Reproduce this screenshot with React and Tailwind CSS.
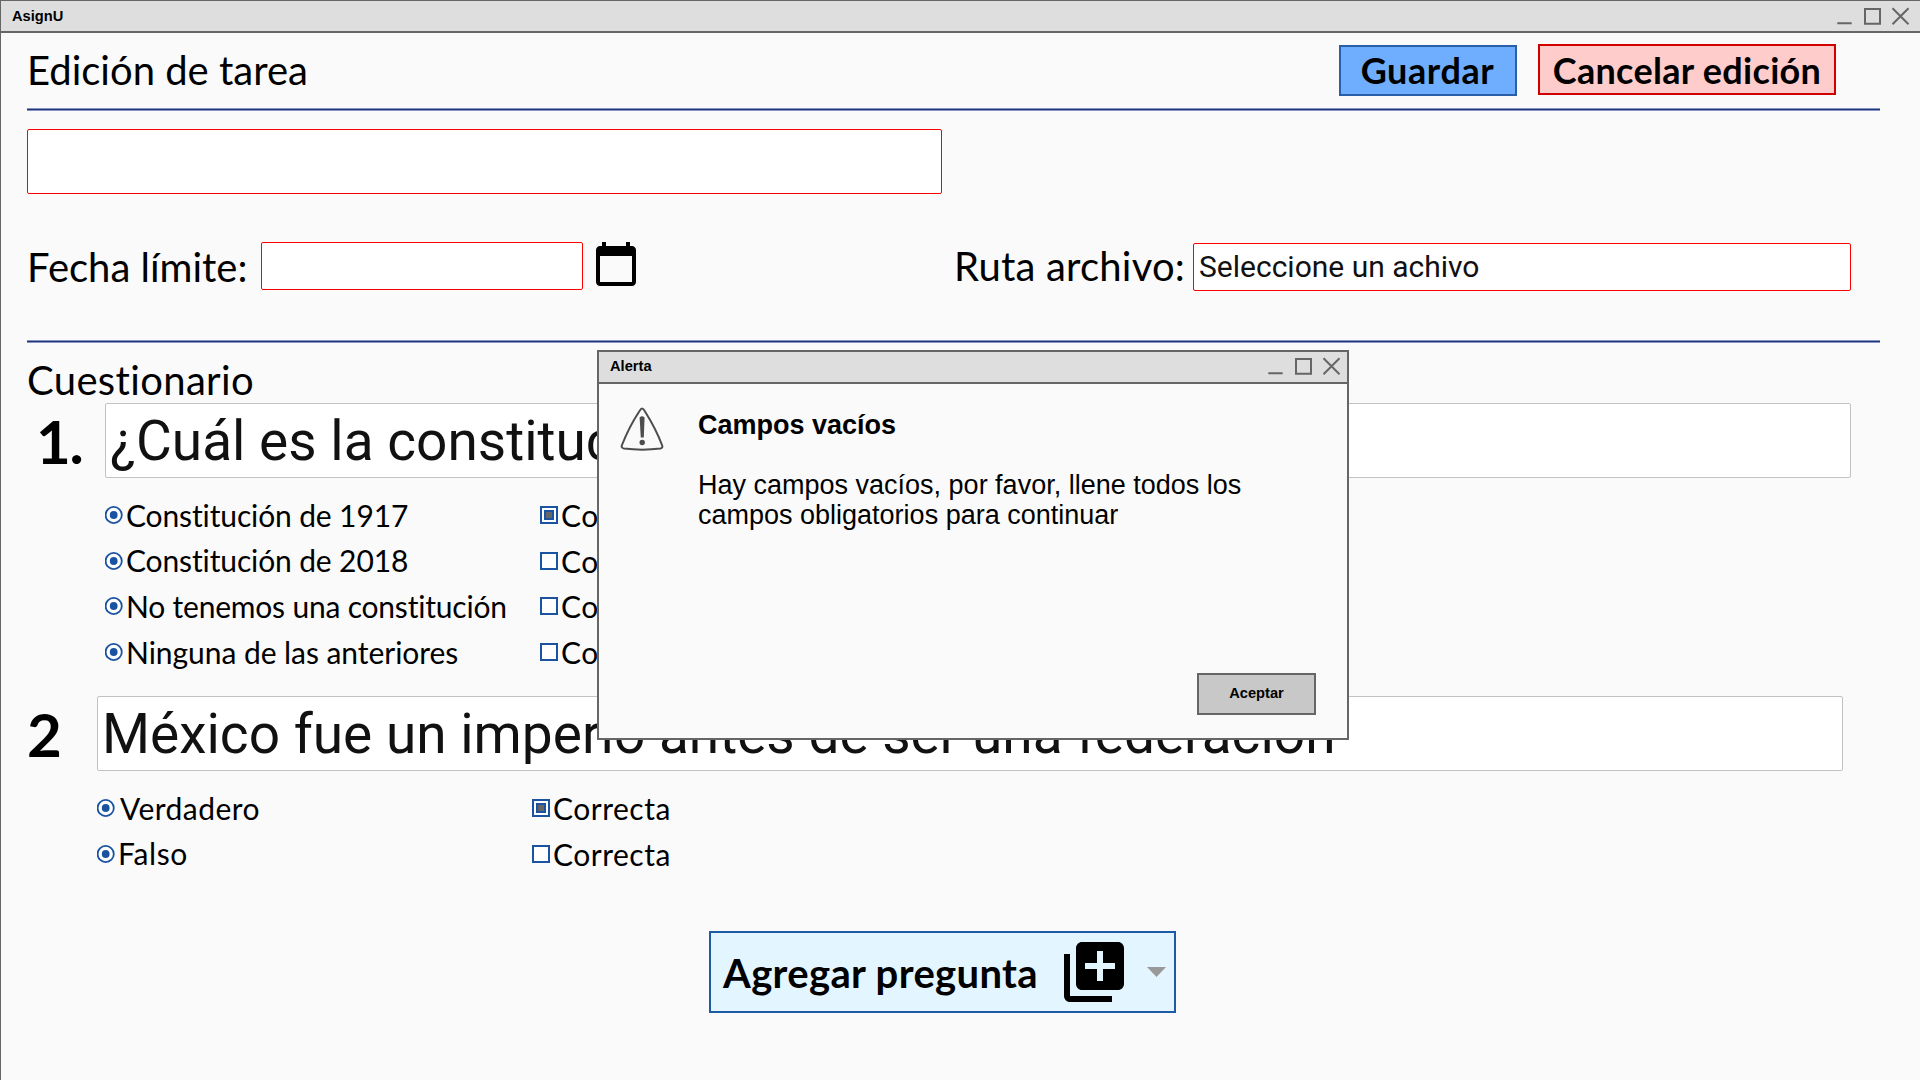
import React from "react";
import { MdCalendarToday, MdLibraryAdd } from "react-icons/md";

function WindowControls() {
  return (
    <svg width="74" height="20" viewBox="0 0 74 20" fill="none" stroke="#666" strokeWidth="2">
      <path d="M0.3 17.3H14.7M28 3H43V17.8H28ZM55.5 2.3L71.5 18.2M71.5 2.3L55.5 18.2" />
    </svg>
  );
}

function Rule({ className }) {
  return <div className={`h-[3px] shrink-0 border-y border-[#8a95bf] bg-[#1c3480] ${className}`} />;
}

function Radio() {
  return (
    <svg width="18" height="18" viewBox="0 0 18 18" className="shrink-0" fill="none">
      <circle cx="8.7" cy="9" r="8.1" fill="#fff" stroke="#1a54a0" strokeWidth="1.8" />
      <circle cx="8.7" cy="9" r="3.9" fill="#1a54a0" />
    </svg>
  );
}

function Checkbox({ checked }) {
  return (
    <div className="flex size-[18px] shrink-0 items-center justify-center border-2 border-[#1a54a0] bg-white">
      {checked && <div className="size-[10px] border-2 border-[#1a54a0] bg-[#666]" />}
    </div>
  );
}

function Option({ label, checked, text = "ml-[3px]" }) {
  return (
    <div className="flex h-[45.7px] items-center">
      <div className="flex w-[435px] shrink-0 items-center">
        <Radio />
        <span className={`whitespace-nowrap ${text}`}>
          {label}
        </span>
      </div>
      <Checkbox checked={checked} />
      <span className="ml-[3px] tracking-[0.5px]">Correcta</span>
    </div>
  );
}

export default function App() {
  return (
    <div className="relative flex h-[1080px] w-[1920px] flex-col overflow-hidden border-l border-t border-[#666] bg-[#fafafa] font-['Lato',sans-serif] text-[30px] leading-[46px] text-black [font-variant-ligatures:none]">
      <header className="flex h-[32px] shrink-0 items-center justify-between border-b-2 border-[#666] bg-[#dedede] pl-[11px] pr-[9px]">
        <span className="font-['Liberation_Sans',sans-serif] text-[14.67px] font-bold leading-[20px]">AsignU</span>
        <WindowControls />
      </header>

      <main className="flex flex-1 flex-col">
        <div className="flex h-[75px] shrink-0 items-start pl-[26px]">
          <h1 className="mt-[13px] grow text-[40px] leading-[48px]">Edición de tarea</h1>
          <button className="mt-[12px] h-[51px] w-[178px] border-2 border-[#2a5fa8] bg-[#6faeff] pr-[1px] text-[36px] font-bold leading-[47px] tracking-[0.6px]">Guardar</button>
          <button className="ml-[21px] mr-[84px] mt-[11px] h-[51px] w-[298px] border-2 border-[#d10000] bg-[#ffcccc] text-[36px] font-bold leading-[49px] tracking-[0.3px]">Cancelar edición</button>
        </div>
        <Rule className="ml-[26px] w-[1853px]" />
        <div className="ml-[26px] mt-[18px] h-[65px] w-[915px] shrink-0 rounded-[2px] border border-[#f00] bg-white" />

        <div className="mt-[48px] flex h-[98px] shrink-0 items-start pl-[26px] text-[40px] leading-[48px]">
          <span className="mt-[1px] w-[234px]">Fecha límite:</span>
          <div className="h-[48px] w-[322px] rounded-[2px] border border-[#f00] bg-white" />
          <MdCalendarToday className="-mt-[2px] ml-[9px] size-[48px]" />
          <span className="ml-[314px] w-[239px] whitespace-nowrap tracking-[0.2px]">Ruta archivo:</span>
          <div className="mt-[1px] h-[48px] w-[658px] rounded-[2px] border border-[#f00] bg-white pl-[5px] font-['Roboto',sans-serif] text-[30px] leading-[46px] text-[#111]">Seleccione un achivo</div>
        </div>
        <Rule className="ml-[26px] w-[1853px]" />

        <h2 className="mt-[13px] h-[47px] shrink-0 pl-[26px] text-[40px] leading-[48px] tracking-[0.35px]">Cuestionario</h2>
        <div className="flex h-[75px] shrink-0">
          <span className="w-[104px] pl-[35px] text-[60px] font-bold leading-[76px] tracking-[-1.2px]">1.</span>
          <div className="h-[75px] w-[1746px] rounded-[2px] border border-[#c2c2c2] bg-white pl-[4px] font-['Roboto',sans-serif] text-[55px] leading-[74px] text-[#111]">¿Cuál es la constitución vigente?</div>
        </div>
        <div className="mt-[14px] flex h-[184px] shrink-0 flex-col pl-[104px]">
          <Option label="Constitución de 1917" checked text="ml-[3px] tracking-[-0.13px]" />
          <Option label="Constitución de 2018" text="ml-[3px] -mt-[2px] tracking-[-0.13px]" />
          <Option label="No tenemos una constitución" text="ml-[3px] tracking-[-0.2px]" />
          <Option label="Ninguna de las anteriores" text="ml-[3px] tracking-[-0.05px]" />
        </div>

        <div className="mt-[20px] flex h-[75px] shrink-0">
          <span className="w-[96px] pl-[26px] text-[60px] font-bold leading-[76px]">2</span>
          <div className="h-[75px] w-[1746px] rounded-[2px] border border-[#c2c2c2] bg-white pl-[4px] font-['Roboto',sans-serif] text-[55px] leading-[74px] text-[#111]">México fue un imperio antes de ser una federación</div>
        </div>
        <div className="mt-[14px] flex h-[92px] shrink-0 flex-col pl-[96px]">
          <Option label="Verdadero" checked text="ml-[5px] tracking-[0.45px]" />
          <Option label="Falso" text="ml-[3px] -mt-[2px] tracking-[0.6px]" />
        </div>

        <button className="ml-[708px] mt-[54px] flex h-[82px] w-[467px] items-center border-2 border-[#1f5aa5] bg-[#e3f5ff] pl-[12px] text-[40px] font-bold leading-[78px]">
          <span className="w-[335px] pt-[2px] text-left tracking-[0.35px]">Agregar pregunta</span>
          <MdLibraryAdd className="-mt-[1px] size-[72px]" />
          <svg className="ml-[17px]" width="19" height="10" viewBox="0 0 19 10"><path d="M0 0H19L9.5 10Z" fill="#999" /></svg>
        </button>
      </main>

      <section className="absolute left-[596px] top-[349px] flex h-[390px] w-[752px] flex-col border-2 border-[#666] bg-[#fafafa] font-['Liberation_Sans',sans-serif]">
        <div className="flex h-[32px] shrink-0 items-center justify-between border-b-2 border-[#666] bg-[#dedede] pb-[2px] pl-[11px] pr-[5px]">
          <span className="pb-[1px] text-[14.67px] font-bold leading-[20px]">Alerta</span>
          <WindowControls />
        </div>
        <div className="flex grow pl-[21px] pt-[23px]">
          <svg width="44" height="44" viewBox="0 0 44 44" fill="none" stroke="#4d4d4d" strokeWidth="2">
            <path d="M22 1.5Q23.5 1.5 25 4.5Q36 22 42 38Q43.2 41 40.5 41.5Q22 43.8 4 41.5Q0.8 41 2 38Q9 20 19.5 4Q21 1.5 22 1.5Z" />
            <path d="M19.6 10.5Q22 8 24.6 10.5L23.8 30.5H20.8Z" fill="#4d4d4d" stroke="none" />
            <circle cx="22.2" cy="35.5" r="2.7" fill="#4d4d4d" stroke="none" />
          </svg>
          <div className="ml-[34px] text-[27px] leading-[30px]">
            <h3 className="mt-[3px] font-bold">Campos vacíos</h3>
            <p className="mt-[30px] w-[580px]">Hay campos vacíos, por favor, llene todos los campos obligatorios para continuar</p>
          </div>
        </div>
        <button className="mb-[23px] mr-[31px] h-[42px] w-[119px] self-end border-2 border-[#666] bg-[#c8c8c8] pb-[2px] text-[14.67px] font-bold leading-[36px]">Aceptar</button>
      </section>
    </div>
  );
}
